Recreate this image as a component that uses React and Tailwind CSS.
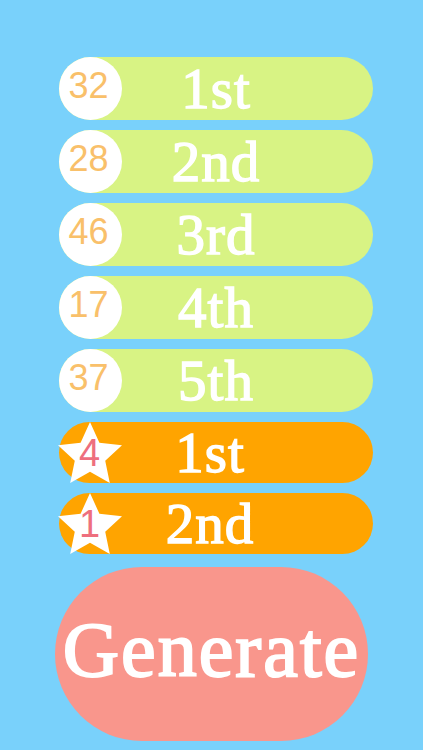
import React from "react";

const picks = [
  { n: 32, place: "1st" },
  { n: 28, place: "2nd" },
  { n: 46, place: "3rd" },
  { n: 17, place: "4th" },
  { n: 37, place: "5th" },
];

const stars = [
  { n: 4, place: "1st" },
  { n: 1, place: "2nd" },
];

const serif = { fontFamily: '"Liberation Serif", "Times New Roman", serif' };
const sans = { fontFamily: '"Liberation Sans", Arial, sans-serif' };

function Star() {
  // five point star, top point up, sized to the pill height
  const cx = 32;
  const cy = 33.7;
  const R = 33.7;
  const r = 16;
  const pts = [];
  for (let i = 0; i < 10; i++) {
    const rad = i % 2 === 0 ? R : r;
    const a = (Math.PI / 5) * i - Math.PI / 2;
    pts.push(`${(cx + rad * Math.cos(a)).toFixed(2)},${(cy + rad * Math.sin(a)).toFixed(2)}`);
  }
  return (
    <svg width="64" height="61" viewBox="0 0 64 61" className="absolute left-[-1px] top-0">
      <polygon points={pts.join(" ")} fill="#ffffff" />
    </svg>
  );
}

export default function App() {
  return (
    <div className="min-h-screen w-full bg-[#79d1fb] pt-[57px] pl-[59px] flex flex-col">
      <div className="flex flex-col gap-[10px] w-[314px]">
        {picks.map((p) => (
          <div
            key={p.place}
            className="relative h-[63px] w-full rounded-full bg-[#d8f384] flex items-center justify-center"
          >
            <div className="absolute left-0 top-0 h-[63px] w-[63px] rounded-full bg-white flex items-center justify-center">
              <span className="text-[36px] leading-none text-[#f9c06a] mb-[6px] mr-[4px]" style={sans}>
                {p.n}
              </span>
            </div>
            <span
              className="text-[57px] leading-none text-white [-webkit-text-stroke:1.4px_white] tracking-[1px]"
              style={serif}
            >
              {p.place}
            </span>
          </div>
        ))}

        {stars.map((s) => (
          <div
            key={s.place}
            className="relative h-[61px] w-full rounded-full bg-[#ffa400] flex items-center justify-center pr-[12px]"
          >
            <Star />
            <div className="absolute left-0 top-0 h-[61px] w-[63px] flex items-center justify-center">
              <span className="text-[38px] leading-none text-[#ee6f7e] mr-[2px]" style={sans}>
                {s.n}
              </span>
            </div>
            <span
              className="text-[57px] leading-none text-white [-webkit-text-stroke:1.4px_white] tracking-[1px]"
              style={serif}
            >
              {s.place}
            </span>
          </div>
        ))}
      </div>

      <button className="mt-[13px] ml-[-4px] h-[174px] w-[313px] rounded-full bg-[#f9968c] flex items-center justify-center pb-[8px]">
        <span
          className="text-[78px] leading-none text-white [-webkit-text-stroke:2px_white] tracking-[2px]"
          style={serif}
        >
          Generate
        </span>
      </button>
    </div>
  );
}
